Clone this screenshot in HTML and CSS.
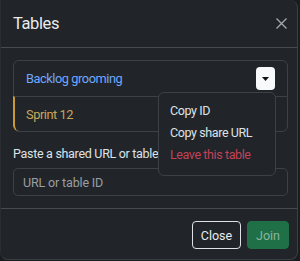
FILE: index.html
```html
<!DOCTYPE html>
<html>
<head>
<meta charset="utf-8">
<link rel="stylesheet" href="styles.css">
</head>
<body>
<div class="modal">
  <div class="modal-header">
    <h5 class="modal-title">Tables</h5>
    <button class="btn-close" aria-label="Close">
      <svg width="11" height="11" viewBox="0 0 11 11"><path d="M0.5 0.5L10.5 10.5M10.5 0.5L0.5 10.5" stroke="#a6a9ac" stroke-width="1.3" fill="none"/></svg>
    </button>
  </div>
  <div class="modal-body">
    <div class="list-group">
      <div class="list-item">
        <span class="item-name link">Backlog grooming</span>
        <button class="toggle"><svg width="7" height="4" viewBox="0 0 7 4"><path d="M0 0H7L3.5 4Z" fill="#111"/></svg></button>
        <div class="dropdown-menu">
          <div class="dropdown-item">Copy ID</div>
          <div class="dropdown-item">Copy share URL</div>
          <div class="dropdown-item danger">Leave this table</div>
        </div>
      </div>
      <div class="list-item active">
        <span class="item-name gold">Sprint 12</span>
      </div>
    </div>
    <label class="form-label">Paste a shared URL or table ID</label>
    <input class="form-control" type="text" placeholder="URL or table ID">
  </div>
  <div class="modal-footer">
    <button class="btn btn-outline">Close</button>
    <button class="btn btn-success" disabled>Join</button>
  </div>
</div>
</body>
</html>
```
FILE: styles.css
```css
* { box-sizing: border-box; }
html, body { margin: 0; padding: 0; }
body {
  background: #1a1d20;
  font-family: Roboto, "Noto Sans", sans-serif;
  color: #dee2e6;
  width: 300px;
  height: 261px;
  overflow: hidden;
}
.modal {
  width: 298px;
  height: 260px;
  background: #212529;
  border: 1px solid #3a3f44;
  border-left-color: #2a2e33;
  border-radius: 8px;
  border-top-left-radius: 0;
  border-top: none;
  display: flex;
  flex-direction: column;
}
.modal-header {
  height: 48px;
  display: flex;
  align-items: center;
  justify-content: space-between;
  padding: 0 10px 0 12px;
  border-bottom: 1px solid #464b50;
}
.modal-title {
  margin: 0;
  font-size: 16.5px;
  letter-spacing: -0.4px;
  font-weight: 400;
  color: #e9ecef;
  line-height: 1;
  padding-top: 2px;
}
.btn-close {
  background: none;
  border: 0;
  padding: 0;
  width: 11px;
  height: 11px;
  display: flex;
}
.modal-body {
  padding: 12px 9px 12px 12px;
  display: flex;
  flex-direction: column;
  border-bottom: 1px solid #464b50;
}
.list-group {
  border: 1px solid #3c4146;
  border-radius: 6px;
  display: flex;
  flex-direction: column;
}
.list-item {
  position: relative;
  height: 35px;
  display: flex;
  align-items: center;
  justify-content: space-between;
  padding: 0 12px 0 12px;
  font-size: 12.8px;
  letter-spacing: -0.45px;
}
.list-item + .list-item { border-top: 1px solid #3c4146; }
.list-item.active {
  border-left: 2px solid #c89a35;
  margin-left: -1px;
  padding-left: 11px;
  border-bottom-left-radius: 6px;
}
.link { color: #6ea8fe; }
.gold { color: #c9a55a; }
.toggle {
  width: 19px;
  height: 23px;
  background: #f8f9fa;
  border: 0;
  border-radius: 4px;
  padding: 0;
  display: flex;
  align-items: center;
  justify-content: center;
}
.dropdown-menu {
  position: absolute;
  left: 144px;
  top: 31px;
  width: 118px;
  height: 84px;
  background: #212529;
  border: 1px solid #3c4146;
  border-radius: 6px;
  padding: 7px 0 0;
  z-index: 5;
  letter-spacing: -0.4px;
}
.dropdown-item {
  height: 22px;
  line-height: 22px;
  padding-left: 11px;
  font-size: 12.5px;
  color: #dee2e6;
}
.dropdown-item.danger { color: #c0435a; }
.form-label {
  margin-top: 13px;
  font-size: 12.5px;
  letter-spacing: -0.3px;
  color: #dee2e6;
  line-height: 18px;
}
.form-control {
  margin-top: 5px;
  height: 28px;
  background: #212529;
  border: 1px solid #3c4146;
  border-radius: 5px;
  padding: 0 9px;
  font-family: inherit;
  font-size: 12.5px;
  letter-spacing: -0.15px;
  color: #dee2e6;
}
.form-control::placeholder { color: #9a9ea2; }
.modal-footer {
  flex: 1;
  display: flex;
  justify-content: flex-end;
  align-items: center;
  gap: 6px;
  padding: 2px 8px 0 0;
}
.btn {
  height: 28px;
  font-family: inherit;
  font-size: 12.5px;
  border-radius: 4px;
  padding: 0 6px;
}
.btn-outline {
  background: transparent;
  color: #e9ecef;
  border: 1px solid #dee2e6;
  width: 49px;
}
.btn-success {
  background: #1f6f47;
  color: #8ab79d;
  border: 1px solid #1f6f47;
  width: 42px;
}
```
